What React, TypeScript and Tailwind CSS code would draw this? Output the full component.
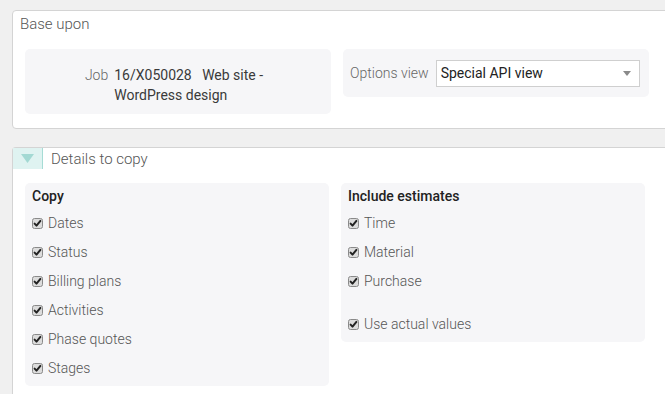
import React from "react";

const font = { fontFamily: "Roboto, 'Noto Sans', sans-serif" };

function Check() {
  return (
    <svg width="11" height="11" viewBox="0 0 11 11" className="shrink-0">
      <rect x="0.5" y="0.5" width="10" height="10" rx="2" fill="#dcdcdc" stroke="#8a8a8a" />
      <path d="M2.6 5.6 L4.5 7.6 L8.4 2.9" fill="none" stroke="#222" strokeWidth="2" strokeLinecap="round" strokeLinejoin="round" />
    </svg>
  );
}

function Row({ label }: { label: string }) {
  return (
    <div className="h-[29px] flex items-center pl-[7px]">
      <Check />
      <span className="ml-[5px] text-[14px] font-light text-[#555]">{label}</span>
    </div>
  );
}

export default function App() {
  return (
    <div style={font} className="w-[665px] h-[394px] overflow-hidden bg-[#f0f0f0] pt-[10px] pl-[12px] flex flex-col">
      <div className="w-[680px] h-[119px] shrink-0 border border-[#d4d4d4] rounded-[4px] bg-white">
        <div className="h-[27px] pl-[7px] flex items-center text-[15px] font-light text-[#555]">Base upon</div>
        <div className="mt-[11px] pl-[12px] grid grid-cols-[306px_306px] gap-[12px] items-start">
          <div className="h-[65px] rounded-[5px] bg-[#f6f6f8] flex justify-center pt-[16px] pr-[8px]">
            <span className="text-[14px] font-light text-[#666] leading-[20px]">Job</span>
            <span className="ml-[6px] text-[14px] text-[#3a3a3a] leading-[20px] whitespace-pre">
              {"16/X050028   Web site -"}
              <br />
              {"WordPress design"}
            </span>
          </div>
          <div className="h-[48px] rounded-[5px] bg-[#f6f6f8] flex items-center pl-[7px] pr-[9px]">
            <span className="text-[14px] font-light text-[#666]">Options view</span>
            <div className="ml-[7px] flex-1 h-[27px] border border-[#cfcfcf] bg-white flex items-center pl-[4px] pr-[8px]">
              <span className="flex-1 text-[14px] text-[#222]">Special API view</span>
              <svg width="8" height="5" viewBox="0 0 8 5">
                <path d="M0 0 L8 0 L4 5 Z" fill="#8a8a8a" />
              </svg>
            </div>
          </div>
        </div>
      </div>
      <div className="mt-[18px] w-[680px] flex-1 border-l border-t border-[#d4d4d4] rounded-tl-[4px] bg-white">
        <div className="h-[21px] flex items-center">
          <div className="w-[30px] h-[21px] bg-[#dff3f1] border-r border-[#a6dcd5] flex items-center justify-center">
            <svg width="13" height="9" viewBox="0 0 13 9">
              <path d="M0 0 L13 0 L6.5 9 Z" fill="#a3d9d3" />
            </svg>
          </div>
          <span className="ml-[8px] mt-[1px] text-[15px] font-light text-[#555]">Details to copy</span>
        </div>
        <div className="mt-[14px] pl-[12px] grid grid-cols-[304px_304px] gap-[12px] items-start">
          <div className="rounded-[5px] bg-[#f6f6f8] pb-[3px]">
            <div className="h-[26px] flex items-center pl-[7px] text-[14px] font-medium text-[#222]">Copy</div>
            <Row label="Dates" />
            <Row label="Status" />
            <Row label="Billing plans" />
            <Row label="Activities" />
            <Row label="Phase quotes" />
            <Row label="Stages" />
          </div>
          <div className="rounded-[5px] bg-[#f6f6f8] pb-[3px]">
            <div className="h-[26px] flex items-center pl-[7px] text-[14px] font-medium text-[#222]">Include estimates</div>
            <Row label="Time" />
            <Row label="Material" />
            <Row label="Purchase" />
            <div className="h-[14px]" />
            <Row label="Use actual values" />
          </div>
        </div>
      </div>
    </div>
  );
}
